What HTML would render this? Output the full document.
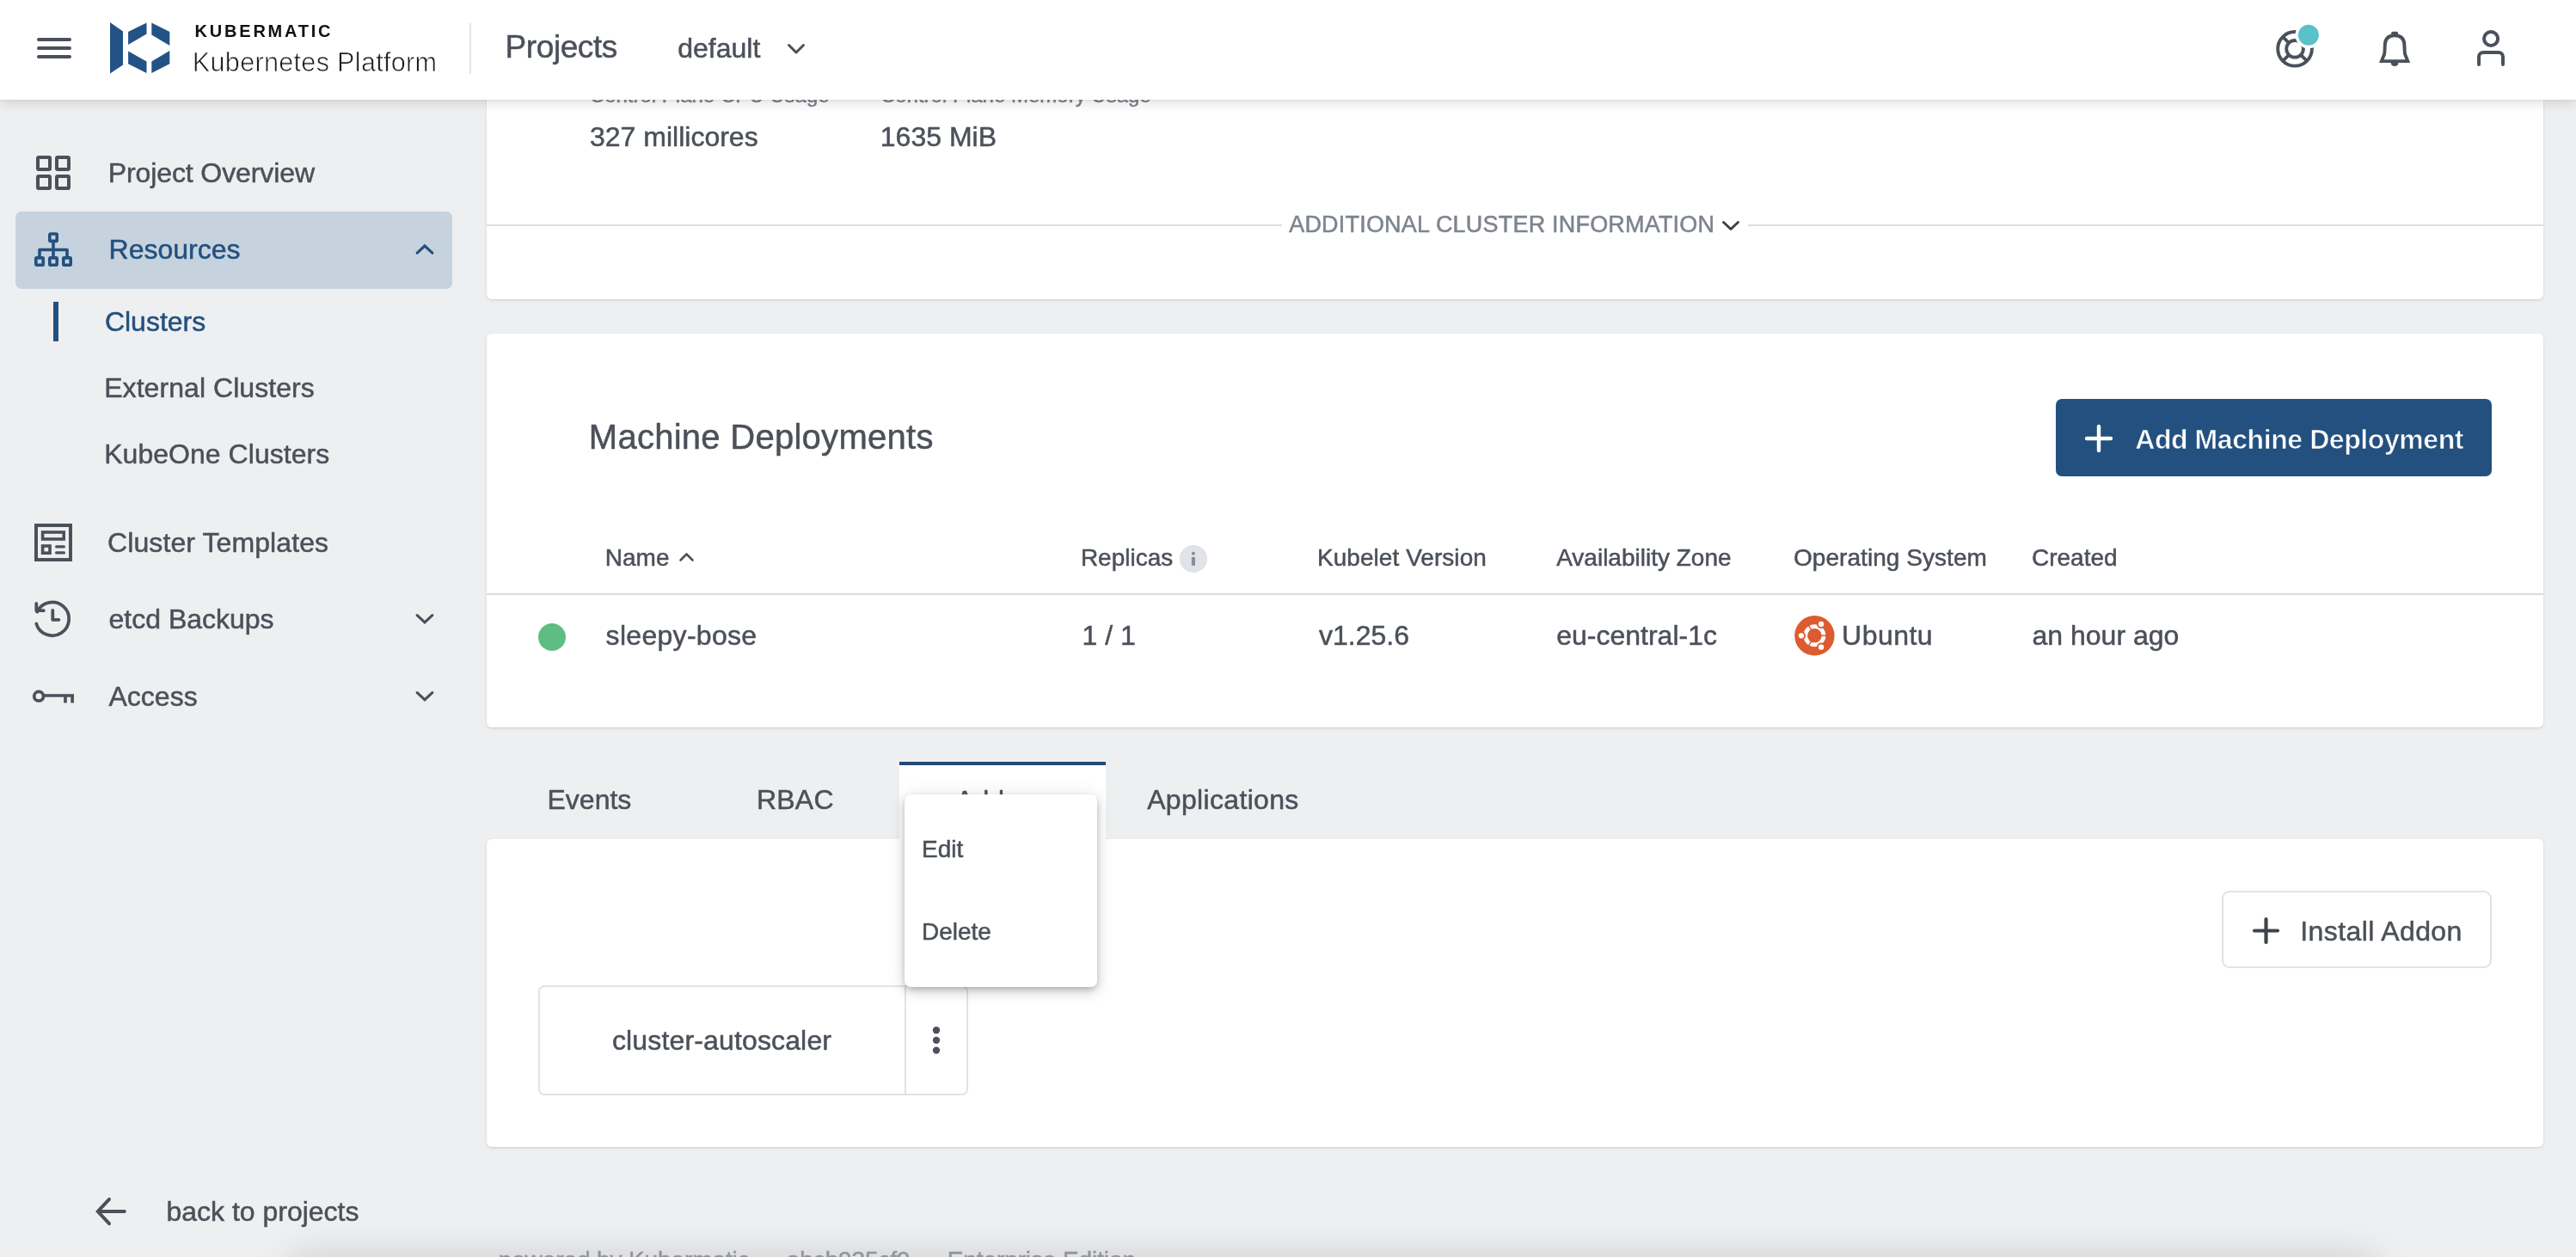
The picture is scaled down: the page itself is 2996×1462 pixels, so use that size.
<!DOCTYPE html>
<html lang="en"><head><meta charset="utf-8"><title>Kubermatic Kubernetes Platform</title>
<style>
html,body{margin:0;padding:0;}
body{width:2996px;height:1462px;overflow:hidden;position:relative;background:#eeeff1;
 font-family:"Liberation Sans",sans-serif;}
.t{position:absolute;white-space:nowrap;-webkit-text-stroke:0.5px;}
.card{position:absolute;background:#fff;border-radius:6px;box-shadow:0 1px 3px rgba(0,0,0,.11),0 2px 5px rgba(0,0,0,.04);}
svg{overflow:visible}
#app{position:absolute;left:0;top:0;width:2996px;height:1462px;overflow:hidden;will-change:transform;}
</style></head><body>
<div id="app">
<main>
<div class="card" style="left:566px;top:60px;width:2392px;height:288px;"></div>
<div class="card" style="left:566px;top:388px;width:2392px;height:458px;"></div>
<div class="card" style="left:566px;top:976px;width:2392px;height:358px;"></div>
<span class="t" style="left:685.8px;top:99.4px;font-size:24px;line-height:24px;color:#7d848e;">Control Plane CPU Usage</span>
<span class="t" style="left:1023.9px;top:99.4px;font-size:24px;line-height:24px;color:#7d848e;">Control Plane Memory Usage</span>
<span class="t" style="left:686.0px;top:142.9px;font-size:32px;line-height:32px;color:#4b5059;">327 millicores</span>
<span class="t" style="left:1023.8px;top:142.9px;font-size:32px;line-height:32px;color:#4b5059;">1635 MiB</span>
<div style="position:absolute;left:566px;top:261px;width:925px;height:2px;background:#dddfe2"></div>
<div style="position:absolute;left:2033px;top:261px;width:925px;height:2px;background:#dddfe2"></div>
<span class="t" style="left:1499.2px;top:248.1px;font-size:27px;line-height:27px;color:#7d848e;letter-spacing:0.2px;">ADDITIONAL CLUSTER INFORMATION</span>
<svg style="position:absolute;left:2003px;top:257px;" width="20" height="11" viewBox="0 0 20 11" fill="none"><path d="M1.5 1.5 L10 9.5 L18.5 1.5" stroke="#3c4149" stroke-width="3" stroke-linecap="round" stroke-linejoin="round"/></svg>
<span class="t" style="left:684.8px;top:487.7px;font-size:40px;line-height:40px;color:#4b5059;letter-spacing:0.27px;">Machine Deployments</span>
<div style="position:absolute;left:2391px;top:464px;width:507px;height:90px;background:#23507e;border-radius:7px"></div>
<svg style="position:absolute;left:2425px;top:494px;" width="32" height="32" viewBox="0 0 32 32" fill="none"><path d="M16 2 V30 M2 16 H30" stroke="#fff" stroke-width="4.4" stroke-linecap="round"/></svg>
<span class="t" style="left:2483.2px;top:494.5px;font-size:32px;line-height:32px;color:#fff;font-weight:700;letter-spacing:-0.42px;-webkit-text-stroke:0.7px #23507e;">Add Machine Deployment</span>
<span class="t" style="left:703.8px;top:635.2px;font-size:28px;line-height:28px;color:#4b5059;">Name</span>
<svg style="position:absolute;left:789.5px;top:643px;" width="17" height="10" viewBox="0 0 17 10" fill="none"><path d="M1.5 8.5 L8.5 1.5 L15.5 8.5" stroke="#4b515b" stroke-width="2.6" stroke-linecap="round" stroke-linejoin="round"/></svg>
<span class="t" style="left:1256.9px;top:635.2px;font-size:28px;line-height:28px;color:#4b5059;">Replicas</span>
<svg style="position:absolute;left:1372px;top:634px;" width="32" height="32" viewBox="0 0 32 32" fill="none"><circle cx="16" cy="15.9" r="16" fill="#e0e3e7"/><circle cx="15.9" cy="9.7" r="2" fill="#868d96"/><rect x="13.9" y="14" width="4.1" height="9.8" fill="#868d96"/></svg>
<span class="t" style="left:1532.0px;top:635.2px;font-size:28px;line-height:28px;color:#4b5059;letter-spacing:0.05px;">Kubelet Version</span>
<span class="t" style="left:1810.2px;top:635.2px;font-size:28px;line-height:28px;color:#4b5059;">Availability Zone</span>
<span class="t" style="left:2086.0px;top:635.2px;font-size:28px;line-height:28px;color:#4b5059;letter-spacing:0.05px;">Operating System</span>
<span class="t" style="left:2363.0px;top:635.2px;font-size:28px;line-height:28px;color:#4b5059;">Created</span>
<div style="position:absolute;left:566px;top:689.6px;width:2392px;height:2px;background:#dadde0"></div>
<div style="position:absolute;left:625.8px;top:724.5px;width:32px;height:32px;background:#5dbd83;border-radius:50%"></div>
<span class="t" style="left:704.6px;top:722.6px;font-size:32px;line-height:32px;color:#4b5059;letter-spacing:0.3px;">sleepy-bose</span>
<span class="t" style="left:1258.5px;top:722.6px;font-size:32px;line-height:32px;color:#4b5059;">1 / 1</span>
<span class="t" style="left:1534.0px;top:722.6px;font-size:32px;line-height:32px;color:#4b5059;">v1.25.6</span>
<span class="t" style="left:1810.2px;top:722.6px;font-size:32px;line-height:32px;color:#4b5059;">eu-central-1c</span>
<span class="t" style="left:2142.1px;top:722.6px;font-size:32px;line-height:32px;color:#4b5059;letter-spacing:0.45px;">Ubuntu</span>
<span class="t" style="left:2363.5px;top:722.6px;font-size:32px;line-height:32px;color:#4b5059;">an hour ago</span>
<svg style="position:absolute;left:2087px;top:716px;" width="47" height="47" viewBox="0 0 47 47" fill="none"><g transform="translate(23.4,23.3)"><circle r="23.2" fill="#dd5b30"/>
<circle r="10.65" stroke="#fff" stroke-width="4.7"/>
<g stroke="#dd5b30" stroke-width="1.5"><path d="M0 0 L15.00 0.00"/><path d="M0 0 L-7.50 12.99"/><path d="M0 0 L-7.50 -12.99"/></g><circle cx="-15.40" cy="0.00" r="5.1" fill="#dd5b30"/><circle cx="-15.40" cy="0.00" r="3.15" fill="#fff"/><circle cx="7.70" cy="13.34" r="5.1" fill="#dd5b30"/><circle cx="7.70" cy="13.34" r="3.15" fill="#fff"/><circle cx="7.70" cy="-13.34" r="5.1" fill="#dd5b30"/><circle cx="7.70" cy="-13.34" r="3.15" fill="#fff"/></g></svg>
<div style="position:absolute;left:1046px;top:886px;width:240px;height:96px;background:#fff;border-top:4px solid #234b73;box-sizing:border-box"></div>
<span class="t" style="left:636.5px;top:913.9px;font-size:32px;line-height:32px;color:#4b5059;">Events</span>
<span class="t" style="left:879.9px;top:913.9px;font-size:32px;line-height:32px;color:#4b5059;letter-spacing:0.25px;">RBAC</span>
<span class="t" style="left:1111.2px;top:915.0px;font-size:32px;line-height:32px;color:#4b5059;">Addons</span>
<span class="t" style="left:1334.2px;top:913.9px;font-size:32px;line-height:32px;color:#4b5059;letter-spacing:0.33px;">Applications</span>
<div style="position:absolute;left:626px;top:1146px;width:500px;height:127.5px;border:2px solid #e1e3e6;border-radius:7px;box-sizing:border-box"></div>
<div style="position:absolute;left:1052px;top:1147px;width:2px;height:125px;background:#e1e3e6"></div>
<span class="t" style="left:711.9px;top:1193.7px;font-size:32px;line-height:32px;color:#4b5059;letter-spacing:0.15px;">cluster-autoscaler</span>
<svg style="position:absolute;left:1080px;top:1190px;" width="18" height="42" viewBox="0 0 18 42" fill="none"><circle cx="9" cy="8.2" r="4.15" fill="#4d5159"/><circle cx="9" cy="19.9" r="4.15" fill="#4d5159"/><circle cx="9" cy="31.6" r="4.15" fill="#4d5159"/></svg>
<div style="position:absolute;left:2583.5px;top:1036.3px;width:314px;height:89.4px;border:2px solid #e1e3e6;border-radius:9px;box-sizing:border-box"></div>
<svg style="position:absolute;left:2619.5px;top:1066.5px;" width="31" height="31" viewBox="0 0 31 31" fill="none"><path d="M15.5 2 V29 M2 15.5 H29" stroke="#3f444c" stroke-width="4.2" stroke-linecap="round"/></svg>
<span class="t" style="left:2675.3px;top:1066.5px;font-size:32px;line-height:32px;color:#4b5059;letter-spacing:0.4px;">Install Addon</span>
<div style="position:absolute;left:1052px;top:924px;width:224px;height:224px;background:#fff;border-radius:7px;box-shadow:0 3px 6px -1px rgba(0,0,0,.2),0 6px 14px 0 rgba(0,0,0,.13),0 2px 22px 0 rgba(0,0,0,.10)"></div>
<span class="t" style="left:1072.0px;top:973.8px;font-size:28px;line-height:28px;color:#4b5059;">Edit</span>
<span class="t" style="left:1072.0px;top:1069.9px;font-size:28px;line-height:28px;color:#4b5059;">Delete</span>
<span class="t" style="left:579.7px;top:1451.5px;font-size:28px;line-height:28px;color:#9aa0a9;letter-spacing:-0.107px;">powered by Kubermatic &mdash; abcb935cf9 &mdash; Enterprise Edition</span>
<div style="position:absolute;left:340px;top:1470px;width:2420px;height:30px;box-shadow:0 0 46px 6px rgba(0,0,0,.165);border-radius:30px;pointer-events:none"></div>
</main>
<nav>
<div style="position:absolute;left:18px;top:246px;width:508px;height:90px;background:#c6d3df;border-radius:7px"></div>
<span class="t" style="left:125.7px;top:184.5px;font-size:32px;line-height:32px;color:#4b5059;letter-spacing:-0.1px;">Project Overview</span>
<span class="t" style="left:126.6px;top:273.9px;font-size:32px;line-height:32px;color:#23507e;">Resources</span>
<div style="position:absolute;left:62px;top:351.3px;width:6px;height:45.5px;background:#23507e"></div>
<span class="t" style="left:121.9px;top:357.6px;font-size:32px;line-height:32px;color:#23507e;">Clusters</span>
<span class="t" style="left:121.2px;top:435.2px;font-size:32px;line-height:32px;color:#4b5059;letter-spacing:0.06px;">External Clusters</span>
<span class="t" style="left:121.2px;top:512.3px;font-size:32px;line-height:32px;color:#4b5059;letter-spacing:0.04px;">KubeOne Clusters</span>
<span class="t" style="left:125.0px;top:614.5px;font-size:32px;line-height:32px;color:#4b5059;letter-spacing:0.1px;">Cluster Templates</span>
<span class="t" style="left:126.5px;top:703.9px;font-size:32px;line-height:32px;color:#4b5059;">etcd Backups</span>
<span class="t" style="left:126.5px;top:793.5px;font-size:32px;line-height:32px;color:#4b5059;">Access</span>
<span class="t" style="left:193.4px;top:1392.9px;font-size:32px;line-height:32px;color:#4b5059;">back to projects</span>
</nav>
<header>
<div style="position:absolute;left:0px;top:0px;width:2996px;height:116px;background:#fff;box-shadow:0 3px 14px rgba(0,0,0,.13),0 1px 3px rgba(0,0,0,.06)"></div>
<div style="position:absolute;left:43px;top:43.9px;width:40px;height:4px;background:#4b515b;border-radius:2px"></div>
<div style="position:absolute;left:43px;top:54px;width:40px;height:4px;background:#4b515b;border-radius:2px"></div>
<div style="position:absolute;left:43px;top:64px;width:40px;height:4px;background:#4b515b;border-radius:2px"></div>
<svg style="position:absolute;left:128px;top:26px;" width="70" height="60" viewBox="0 0 70 60" fill="none"><g fill="#235286">
<polygon points="0,0 15,10.6 15,49.6 0,59.6"/>
<polygon points="21.1,11.1 42.5,0.4 42.5,13.5 21.1,26"/>
<polygon points="48.3,0.4 69.3,11.1 69.3,26.9 48.3,14.4"/>
<polygon points="21.1,33.6 42.5,45.6 42.5,59 21.1,48.3"/>
<polygon points="48.3,45.6 69.3,33.1 69.3,48.3 48.3,59"/></g></svg>
<span class="t" style="left:226.6px;top:26.4px;font-size:20px;line-height:20px;color:#111;font-weight:700;letter-spacing:2.78px;-webkit-text-stroke:0;">KUBERMATIC</span>
<span class="t" style="left:223.8px;top:57.0px;font-size:30.6px;line-height:30.6px;color:#1c1c1c;letter-spacing:0.3px;-webkit-text-stroke:0.7px #fff;">Kubernetes Platform</span>
<div style="position:absolute;left:546px;top:26.5px;width:2px;height:59px;background:#e3e4e6"></div>
<span class="t" style="left:587.6px;top:35.6px;font-size:37px;line-height:37px;color:#4b5059;letter-spacing:-0.42px;">Projects</span>
<span class="t" style="left:788.2px;top:39.8px;font-size:32px;line-height:32px;color:#4b5059;">default</span>
<svg style="position:absolute;left:916px;top:50.5px;" width="20" height="12" viewBox="0 0 20 12" fill="none"><path d="M1.5 1.5 L10 10 L18.5 1.5" stroke="#4b515b" stroke-width="3" stroke-linecap="round" stroke-linejoin="round"/></svg>
</header>
<nav>
<svg style="position:absolute;left:42px;top:181px;" width="40" height="40" viewBox="0 0 40 40" fill="none"><rect x="2" y="2" width="14" height="14" rx="1" stroke="#4b515b" stroke-width="4"/><rect x="2" y="24" width="14" height="14" rx="1" stroke="#4b515b" stroke-width="4"/><rect x="24" y="2" width="14" height="14" rx="1" stroke="#4b515b" stroke-width="4"/><rect x="24" y="24" width="14" height="14" rx="1" stroke="#4b515b" stroke-width="4"/></svg>
<svg style="position:absolute;left:40px;top:270px;" width="44" height="40" viewBox="0 0 44 40" fill="none"><g stroke="#23507e" stroke-width="3.6" stroke-linejoin="round">
<rect x="17.8" y="2" width="8.4" height="8.4" rx="1"/>
<rect x="1.8" y="29.9" width="8.4" height="8.4" rx="1"/><rect x="17.8" y="29.9" width="8.4" height="8.4" rx="1"/><rect x="33.8" y="29.9" width="8.4" height="8.4" rx="1"/>
<path d="M22 11 V29 M6 29 V20.5 H38 V29"/></g></svg>
<svg style="position:absolute;left:483px;top:282.8px;" width="22" height="14" viewBox="0 0 22 14" fill="none"><path d="M2.2 11.2 L11 3 L19.8 11.2" stroke="#23507e" stroke-width="3.2" stroke-linecap="round"/></svg>
<svg style="position:absolute;left:40px;top:609px;" width="44" height="44" viewBox="0 0 44 44" fill="none"><g stroke="#4b515b"><rect x="2" y="2" width="40" height="40" stroke-width="4"/>
<rect x="9.6" y="10" width="24.6" height="8" stroke-width="3.6"/>
<rect x="9.6" y="26" width="8.4" height="8.2" stroke-width="3.6"/>
<path d="M25.6 26.8 H34.4 M25.6 33.9 H34.4" stroke-width="3.3" stroke-linecap="round"/></g></svg>
<svg style="position:absolute;left:0px;top:0px;pointer-events:none" width="120" height="800" viewBox="0 0 120 800" fill="none"><g stroke="#4b515b" stroke-width="3.8" stroke-linecap="round" stroke-linejoin="round">
<path d="M43.22 711.60 A19.4 19.4 0 1 1 42.25 725.47"/>
<path d="M42.3 702 V710.2 H50.8"/>
<path d="M61.3 710 V720.8 H68.4"/></g></svg>
<svg style="position:absolute;left:36px;top:800px;" width="52" height="20" viewBox="0 0 52 20" fill="none"><g stroke="#4b515b" stroke-width="3.7"><circle cx="9.1" cy="9.8" r="5.4"/>
<path d="M14.5 9 H50 M48.1 9 V17.6 M40 9 V17.6" stroke-linejoin="miter"/></g></svg>
<svg style="position:absolute;left:483px;top:712.9px;" width="22" height="14" viewBox="0 0 22 14" fill="none"><path d="M2.2 2.6 L11 10.8 L19.8 2.6" stroke="#4b515b" stroke-width="3.2" stroke-linecap="round"/></svg>
<svg style="position:absolute;left:483px;top:802.8px;" width="22" height="14" viewBox="0 0 22 14" fill="none"><path d="M2.2 2.6 L11 10.8 L19.8 2.6" stroke="#4b515b" stroke-width="3.2" stroke-linecap="round"/></svg>
<svg style="position:absolute;left:108px;top:1390px;" width="42" height="38" viewBox="0 0 42 38" fill="none"><path d="M36.8 19 H6 M19 4.8 L5.8 19 L19 33.2" stroke="#4b515b" stroke-width="4" stroke-linecap="round" stroke-linejoin="miter"/></svg>
</nav>
<header>
<svg style="position:absolute;left:2640px;top:28px;" width="70" height="60" viewBox="0 0 70 60" fill="none"><g transform="translate(29.05,28.8)" stroke="#4b515b" stroke-width="3.9">
<circle r="19.85"/><circle r="9.85"/>
<path d="M-14.04 -14.04 L-6.97 -6.97 M-14.04 14.04 L-6.97 6.97 M14.04 14.04 L6.97 6.97 M14.04 -14.04 L6.97 -6.97"/></g>
<circle cx="44.9" cy="12.8" r="15.4" fill="#fff"/><circle cx="44.9" cy="12.8" r="12" fill="#58c1c9"/></svg>
<svg style="position:absolute;left:2760px;top:30px;" width="50" height="52" viewBox="0 0 50 52" fill="none"><g transform="translate(25.1,0)"><path d="M-15.2 41.1 H15.2 L12 33 C11.4 29.5 11.5 26 11.3 22 C11 14.5 6.8 11.2 0 11.2 C-6.8 11.2 -11 14.5 -11.3 22 C-11.5 26 -11.4 29.5 -12 33 Z" stroke="#4b515b" stroke-width="3.9" stroke-linejoin="miter"/>
<rect x="-4" y="6.8" width="8" height="5" rx="2" fill="#4b515b"/><path d="M-4.3 43 A4.3 3.9 0 0 0 4.3 43 Z" fill="#4b515b"/></g></svg>
<svg style="position:absolute;left:2876px;top:30px;" width="42" height="50" viewBox="0 0 42 50" fill="none"><g stroke="#4b515b" stroke-width="4" stroke-linecap="round"><circle cx="21.1" cy="15" r="8.05"/>
<path d="M7.05 45 V36 a5 5 0 0 1 5 -5 H30 a5 5 0 0 1 5 5 V45"/></g></svg>
</header>
</div>
</body></html>
